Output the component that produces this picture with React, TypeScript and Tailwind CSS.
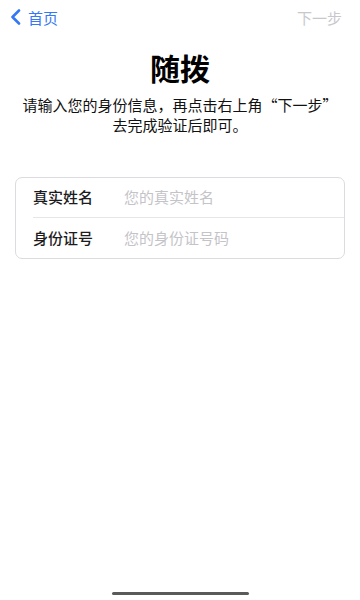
import React from "react";

const FONT = '"Noto Sans CJK SC", "Noto Sans", sans-serif';

function Row({ label, placeholder, last }: { label: string; placeholder: string; last?: boolean }) {
  return (
    <div className="flex h-[40px] items-center pl-[17px]">
      <div className={`flex h-full flex-1 items-center ${last ? "" : "border-b border-[#e5e5ea]"}`}>
        <span className="w-[91px] text-[15px] font-medium text-[#1c1c1e]">{label}</span>
        <span className="text-[15px] text-[#c4c4c8]">{placeholder}</span>
      </div>
    </div>
  );
}

export default function App() {
  return (
    <div className="flex min-h-[600px] flex-col bg-white" style={{ fontFamily: FONT }}>
      {/* Nav bar */}
      <div className="flex h-[34px] items-center justify-between pl-[10px] pr-[18px]">
        <div className="flex items-center gap-[7px] text-[#3478f6]">
          <svg width="11" height="16" viewBox="0 0 11 16" fill="none">
            <path d="M9 1.5 2.5 8 9 14.5" stroke="currentColor" strokeWidth="2.6" strokeLinecap="round" strokeLinejoin="round" />
          </svg>
          <span className="text-[15px] leading-none">首页</span>
        </div>
        <span className="text-[15px] leading-none text-[#c8c8cc]">下一步</span>
      </div>

      {/* Title */}
      <h1 className="mt-[13px] text-center text-[30px] font-bold leading-[40px] text-black">随拨</h1>

      <p className="mt-[8px] px-2 text-center text-[15px] leading-[20px] text-[#111]">
        请输入您的身份信息，再点击右上角“下一步”
        <br />
        去完成验证后即可。
      </p>

      {/* Form card */}
      <div className="mx-[15px] mt-[42px] overflow-hidden rounded-[7px] border border-[#dcdce0]">
        <Row label="真实姓名" placeholder="您的真实姓名" />
        <Row label="身份证号" placeholder="您的身份证号码" last />
      </div>

      <div className="flex-1" />

      {/* Home indicator */}
      <div className="flex justify-center pb-[5px]">
        <div className="h-[3px] w-[137px] rounded-full bg-[#5a5a5a]" />
      </div>
    </div>
  );
}
